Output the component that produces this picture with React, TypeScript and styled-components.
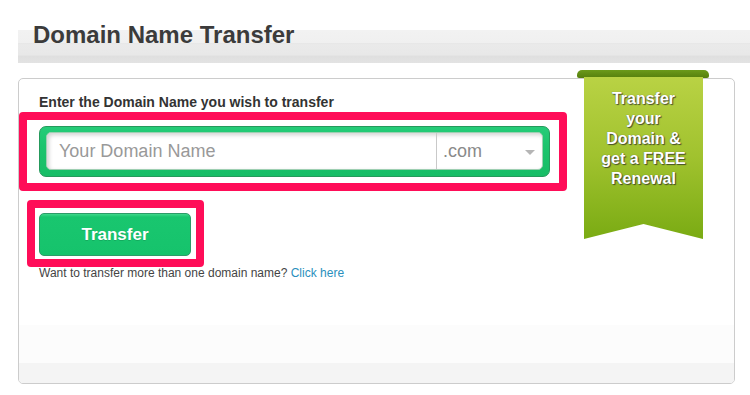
import styled, { createGlobalStyle } from "styled-components";

const GlobalStyle = createGlobalStyle`
  html, body {
    margin: 0;
    padding: 0;
    background: #ffffff;
    font-family: "Liberation Sans", Arial, sans-serif;
  }
`;

const Page = styled.div`
  width: 750px;
  height: 395px;
  overflow: hidden;
  padding-top: 30px;
  box-sizing: border-box;
`;

const HeaderBar = styled.div`
  display: flow-root;
  margin-left: 18px;
  height: 33px;
  padding-left: 15px;
  background:
    linear-gradient(
      to bottom,
      #f2f2f2 0%,
      #f0f0f0 38%,
      #e7e7e7 40%,
      #eaeaea 45%,
      #e8e8e8 75%,
      #dfdfdf 80%,
      #e3e3e3 100%
    );
`;

const Title = styled.h1`
  margin: -7px 0 0;
  font-size: 24px;
  line-height: 24px;
  font-weight: bold;
  color: #3b3b3b;
`;

const Card = styled.div`
  position: relative;
  margin: 15px 0 0 18px;
  width: 717px;
  height: 306px;
  box-sizing: border-box;
  border: 1px solid #cccccc;
  border-radius: 5px;
  display: flex;
  flex-direction: column;
`;

const CardBody = styled.div`
  flex: 1;
  padding: 15px 20px 0;
`;

const Label = styled.div`
  font-size: 14px;
  line-height: 16px;
  font-weight: bold;
  color: #333333;
`;

const Highlight = styled.div<{ $offset: number; $pad: string; $width: number }>`
  box-sizing: border-box;
  margin-left: ${(p) => -p.$offset}px;
  width: ${(p) => p.$width}px;
  border: 8px solid #ff0d58;
  border-radius: 4px;
  padding: ${(p) => p.$pad};
  background: #ffffff;
`;

const FirstHighlight = styled(Highlight)`
  margin-top: 2px;
`;

const SecondHighlight = styled(Highlight)`
  margin-top: 9px;
`;

const DomainFrame = styled.div`
  display: flex;
  width: 511px;
  height: 51px;
  box-sizing: border-box;
  padding: 5px 6px 6px;
  border: 1px solid #259a5c;
  border-radius: 7px;
  background: linear-gradient(to bottom, #25cc78 0%, #1cc46d 40%, #17bd66 100%);
`;

const Field = styled.div`
  flex: 1;
  display: flex;
  background: #ffffff;
  border-radius: 5px;
  border: 1px solid #9ecfb2;
  box-shadow: inset 2px 2px 4px rgba(0, 0, 0, 0.18);
  overflow: hidden;
`;

const NameInput = styled.input`
  flex: 1;
  min-width: 0;
  border: none;
  outline: none;
  background: transparent;
  padding: 0 0 0 12px;
  font-family: "Liberation Sans", Arial, sans-serif;
  font-size: 18px;
  color: #555555;

  &::placeholder {
    color: #999999;
  }
`;

const TldSelect = styled.div`
  width: 106px;
  display: flex;
  align-items: center;
  justify-content: space-between;
  padding: 0 7px 0 6px;
  box-sizing: border-box;
  border-left: 1px solid #c9c9c9;
  font-size: 18px;
  color: #8a8a8a;
`;

const Caret = styled.span`
  width: 0;
  height: 0;
  border-left: 5px solid transparent;
  border-right: 5px solid transparent;
  border-top: 5px solid #b5b5b5;
  margin-top: 2px;
`;

const TransferButton = styled.button`
  display: block;
  width: 152px;
  height: 43px;
  border: 1px solid #2e9b69;
  border-radius: 5px;
  background: linear-gradient(to bottom, #3fd88a 0px, #19c66f 3px, #16c36c 100%);
  color: #ffffff;
  font-family: "Liberation Sans", Arial, sans-serif;
  font-size: 17px;
  font-weight: bold;
  cursor: pointer;
  text-shadow: 0 1px 0 rgba(0, 0, 0, 0.15);
`;

const MoreText = styled.div`
  margin-top: -1px;
  font-size: 12px;
  line-height: 14px;
  color: #444444;
`;

const Link = styled.a`
  color: #2a8fbd;
  text-decoration: none;
`;

const DottedStrip = styled.div`
  height: 38px;
  background-color: #fcfcfc;
  background-image: radial-gradient(circle, #f0f0f0 0.6px, transparent 0.7px);
  background-size: 2px 2px;
`;

const SolidStrip = styled.div`
  height: 20px;
  background: #f4f4f4;
  border-radius: 0 0 4px 4px;
`;

const Ribbon = styled.div`
  position: absolute;
  top: -9px;
  left: 558px;
  width: 132px;
`;

const RibbonRoll = styled.div`
  height: 8px;
  border-radius: 5px 5px 2px 2px;
  background: linear-gradient(to bottom, #6b9a1a 0%, #557f0d 100%);
`;

const RibbonBody = styled.div`
  margin: -1px 6px 0 7px;
  height: 162px;
  box-sizing: border-box;
  padding-top: 12px;
  background: linear-gradient(to bottom, #b9d244 0%, #a0c22e 50%, #7aab13 100%);
  clip-path: polygon(0 0, 100% 0, 100% 100%, 50% calc(100% - 15px), 0 100%);
  text-align: center;
  color: #ffffff;
  font-size: 16px;
  line-height: 20px;
  font-weight: bold;
  text-shadow: 1px 1px 1px rgba(40, 40, 40, 0.75), 0 0 1px rgba(40, 40, 40, 0.5);
`;

export default function App() {
  return (
    <>
      <GlobalStyle />
      <Page>
        <HeaderBar>
          <Title>Domain Name Transfer</Title>
        </HeaderBar>
        <Card>
          <CardBody>
            <Label>Enter the Domain Name you wish to transfer</Label>
            <FirstHighlight $offset={20} $width={548} $pad="6px 9px 6px 12px">
              <DomainFrame>
                <Field>
                  <NameInput placeholder="Your Domain Name" />
                  <TldSelect>
                    <span>.com</span>
                    <Caret />
                  </TldSelect>
                </Field>
              </DomainFrame>
            </FirstHighlight>
            <SecondHighlight $offset={12} $width={177} $pad="5px 5px 3px 4px">
              <TransferButton>Transfer</TransferButton>
            </SecondHighlight>
            <MoreText>
              Want to transfer more than one domain name? <Link href="#">Click here</Link>
            </MoreText>
          </CardBody>
          <DottedStrip />
          <SolidStrip />
          <Ribbon>
            <RibbonRoll />
            <RibbonBody>
              Transfer
              <br />
              your
              <br />
              Domain &amp;
              <br />
              get a FREE
              <br />
              Renewal
            </RibbonBody>
          </Ribbon>
        </Card>
      </Page>
    </>
  );
}
